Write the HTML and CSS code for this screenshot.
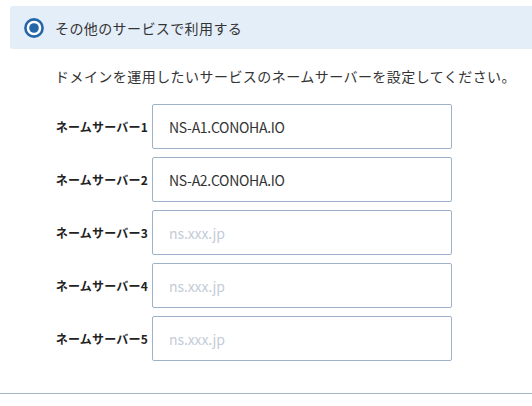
FILE: index.html
```html
<!DOCTYPE html>
<html lang="ja">
<head>
<meta charset="utf-8">
<link rel="stylesheet" href="styles.css">
</head>
<body>
<div class="page">
  <div class="option">
    <span class="radio"><svg width="20" height="20" viewBox="0 0 20 20"><circle cx="10" cy="10" r="8.6" fill="#fff" stroke="#2466a8" stroke-width="2.6"/><circle cx="10" cy="10" r="4.8" fill="#2466a8"/></svg></span>
    <span class="option-label">その他のサービスで利用する</span>
  </div>
  <p class="desc">ドメインを運用したいサービスのネームサーバーを設定してください。</p>
  <div class="form">
    <label class="lbl">ネームサーバー1</label>
    <div class="field">NS-A1.CONOHA.IO</div>
    <label class="lbl">ネームサーバー2</label>
    <div class="field">NS-A2.CONOHA.IO</div>
    <label class="lbl">ネームサーバー3</label>
    <div class="field ph">ns.xxx.jp</div>
    <label class="lbl">ネームサーバー4</label>
    <div class="field ph">ns.xxx.jp</div>
    <label class="lbl">ネームサーバー5</label>
    <div class="field ph">ns.xxx.jp</div>
  </div>
  <div class="rule"></div>
</div>
</body>
</html>
```

FILE: styles.css
```css
html, body {
  margin: 0;
  padding: 0;
  background: #fff;
  overflow: hidden;
}
body {
  font-family: "Noto Sans CJK JP", "Noto Sans", sans-serif;
  color: #333;
  width: 532px;
  height: 406px;
}
.page {
  padding-top: 6px;
}
.option {
  margin-left: 10px;
  margin-right: -20px;
  height: 43px;
  background: #e4eef9;
  border-radius: 3px;
  display: flex;
  align-items: center;
  padding-left: 14px;
}
.radio {
  width: 20px;
  height: 20px;
  display: flex;
}
.option-label {
  margin-left: 11px;
  font-size: 14px;
  letter-spacing: 0.4px;
  color: #333;
  line-height: 20px;
}
.desc {
  margin: 0;
  padding-left: 55px;
  font-size: 14px;
  letter-spacing: 0.45px;
  line-height: 20px;
  margin-top: 17px;
  color: #333;
}
.form {
  margin-top: 18px;
  display: grid;
  grid-template-columns: 148px 300px;
  column-gap: 4px;
  row-gap: 8px;
  align-items: center;
}
.lbl {
  justify-self: end;
  font-size: 12px;
  font-weight: bold;
  color: #222;
  letter-spacing: 0.2px;
}
.field {
  height: 45px;
  box-sizing: border-box;
  border: 1px solid #9db2c8;
  border-radius: 2px;
  display: flex;
  align-items: center;
  padding-left: 16px;
  font-size: 14px;
  letter-spacing: -0.3px;
  color: #333;
}
.field.ph {
  color: #c3ccd7;
  letter-spacing: -0.1px;
}
.rule {
  margin-top: 32px;
  height: 1px;
  background: #a3b6ca;
}
```
